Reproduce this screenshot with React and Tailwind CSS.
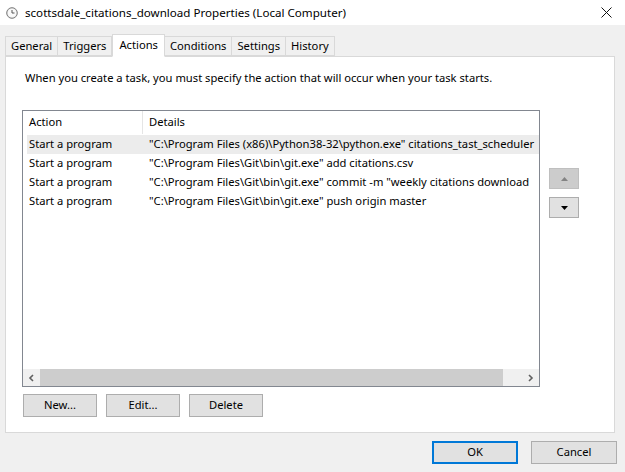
import React from 'react';

const tabs = ['General', 'Triggers', 'Actions', 'Conditions', 'Settings', 'History'];

const actions = [
  { action: 'Start a program', details: '"C:\\Program Files (x86)\\Python38-32\\python.exe" citations_tast_scheduler' },
  { action: 'Start a program', details: '"C:\\Program Files\\Git\\bin\\git.exe" add citations.csv' },
  { action: 'Start a program', details: '"C:\\Program Files\\Git\\bin\\git.exe" commit -m "weekly citations download' },
  { action: 'Start a program', details: '"C:\\Program Files\\Git\\bin\\git.exe" push origin master' },
];

function ClockIcon() {
  return (
    <svg width="12" height="12" viewBox="0 0 12 12">
      <circle cx="6" cy="6" r="5.3" fill="#e8e8e8" stroke="#7a7a7a" strokeWidth="1" />
      <circle cx="6" cy="6" r="4" fill="#fafafa" />
      <path d="M6 3v3h2.5" stroke="#555" strokeWidth="1" fill="none" />
    </svg>
  );
}

function WinButton({ children }) {
  return (
    <button className="h-[23px] w-[74px] bg-[#e1e1e1] border border-[#adadad] text-[11.2px] text-black flex items-center justify-center">
      {children}
    </button>
  );
}

export default function App() {
  return (
    <div
      className="w-[625px] h-[472px] bg-[#f0f0f0] flex flex-col overflow-hidden text-black"
      style={{ fontFamily: '"Noto Sans", sans-serif' }}
    >
      {/* title bar */}
      <div className="h-[25px] bg-white flex items-center pl-[6px] pr-[13px]">
        <ClockIcon />
        <span className="ml-[7px] text-[11.6px] leading-none">scottsdale_citations_download Properties (Local Computer)</span>
        <svg className="ml-auto" width="11" height="11" viewBox="0 0 11 11">
          <path d="M0.5 0.5l10 10M10.5 0.5l-10 10" stroke="#111" strokeWidth="1" />
        </svg>
      </div>

      {/* tabs */}
      <div className="mt-[11px] ml-[5px] flex items-end h-[20px] relative z-10">
        {tabs.map((t) =>
          t === 'Actions' ? (
            <div
              key={t}
              className="h-[23px] -mb-px px-[6px] bg-white border border-[#d9d9d9] border-b-white text-[11.2px] flex items-center"
            >
              {t}
            </div>
          ) : (
            <div
              key={t}
              className="h-[20px] px-[5px] bg-[#f0f0f0] border border-[#d9d9d9] -ml-px first:ml-0 text-[11.2px] flex items-center"
            >
              {t}
            </div>
          )
        )}
      </div>

      {/* panel */}
      <div className="mx-[5px] h-[377px] w-[610px] bg-white border border-[#d9d9d9] flex flex-col">
        <p className="mt-[13px] ml-[19px] text-[11.2px] leading-[16px]">
          When you create a task, you must specify the action that will occur when your task starts.
        </p>

        <div className="flex mt-[24px] ml-[16px]">
          {/* list */}
          <div className="w-[518px] h-[277px] border border-[#828790] flex flex-col">
            <div className="h-[23px] flex text-[11.2px] items-center">
              <div className="w-[120px] pl-[6px] h-full flex items-center border-r border-[#e5e5e5]">Action</div>
              <div className="pl-[6px]">Details</div>
            </div>
            <div className="flex-1 pt-[1px] pl-[4px] overflow-hidden">
              {actions.map((a, i) => (
                <div
                  key={i}
                  className={`h-[19px] flex items-center text-[11.2px] whitespace-nowrap overflow-hidden ${i === 0 ? 'bg-[#ececec]' : ''}`}
                >
                  <div className="w-[120px] shrink-0 pl-[2px]">{a.action}</div>
                  <div className="pl-[2px]">{a.details}</div>
                </div>
              ))}
            </div>
            {/* horizontal scrollbar */}
            <div className="h-[17px] flex bg-[#f0f0f0]">
              <div className="w-[17px] flex items-center justify-center">
                <svg width="7" height="8" viewBox="0 0 7 8">
                  <path d="M5 1L2 4l3 3" stroke="#606060" strokeWidth="1.6" fill="none" />
                </svg>
              </div>
              <div className="w-[463px] bg-[#cdcdcd]" />
              <div className="flex-1" />
              <div className="w-[17px] flex items-center justify-center">
                <svg width="7" height="8" viewBox="0 0 7 8">
                  <path d="M2 1l3 3-3 3" stroke="#606060" strokeWidth="1.6" fill="none" />
                </svg>
              </div>
            </div>
          </div>

          {/* move buttons */}
          <div className="ml-[9px] mt-[58px] flex flex-col gap-[8px]">
            <div className="w-[30px] h-[21px] bg-[#cccccc] border border-[#bfbfbf] flex items-center justify-center">
              <svg width="7" height="4" viewBox="0 0 7 4">
                <path d="M0 4L3.5 0 7 4z" fill="#838383" />
              </svg>
            </div>
            <div className="w-[30px] h-[21px] bg-[#e1e1e1] border border-[#adadad] flex items-center justify-center">
              <svg width="7" height="4" viewBox="0 0 7 4">
                <path d="M0 0h7L3.5 4z" fill="#000" />
              </svg>
            </div>
          </div>
        </div>

        <div className="flex gap-[9px] ml-[17px] mt-[7px]">
          <WinButton>New...</WinButton>
          <WinButton>Edit...</WinButton>
          <WinButton>Delete</WinButton>
        </div>
      </div>

      {/* dialog buttons */}
      <div className="flex mt-[8px] ml-[432px] gap-[13px]">
        <button className="h-[23px] w-[86px] bg-[#e1e1e1] border-2 border-[#0078d7] text-[11.2px] flex items-center justify-center">
          OK
        </button>
        <button className="h-[23px] w-[86px] bg-[#e1e1e1] border border-[#adadad] text-[11.2px] flex items-center justify-center">
          Cancel
        </button>
      </div>
    </div>
  );
}
